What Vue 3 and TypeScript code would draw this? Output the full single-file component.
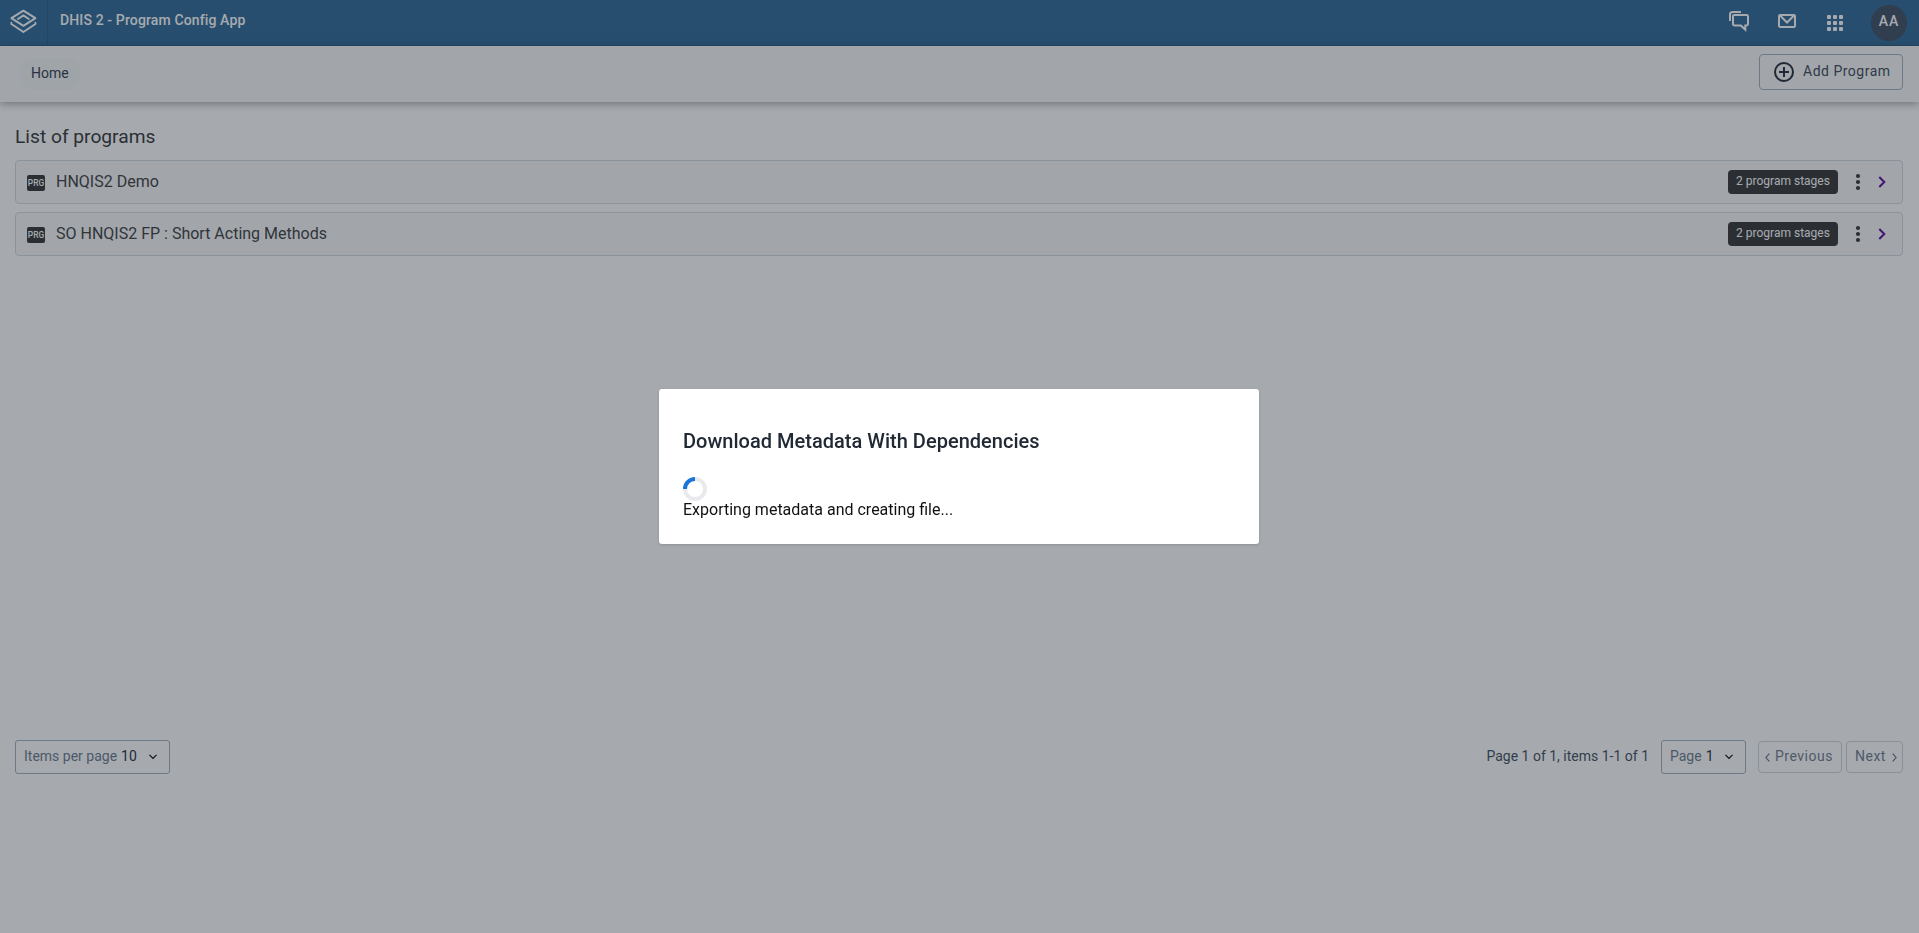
<script setup lang="ts">
interface Program {
  name: string
  stages: number
}

const programs: Program[] = [
  { name: 'HNQIS2 Demo', stages: 2 },
  { name: 'SO HNQIS2 FP : Short Acting Methods', stages: 2 },
]
</script>

<template>
  <div class="app">
    <header class="header">
      <div class="logo">
        <svg width="28" height="26" viewBox="-0.4 0 28 26" fill="none" stroke="#fff" stroke-width="1.9" stroke-linejoin="round" stroke-linecap="round">
          <path d="M14 2.6 26 10.1 14 17.9 2 10.1Z" />
          <path d="M8.6 11 14 7.4l5.4 3.6" />
          <path d="M2 14.8V16L14 24 26 16V14.8" />
        </svg>
      </div>
      <h1 class="app-name">DHIS 2 - Program Config App</h1>
      <div class="header-icons">
        <svg class="chat" width="24" height="24" viewBox="0 0 24 24" fill="none" stroke="#fff" stroke-width="2">
          <path d="M3 12V5.5A2.6 2.6 0 0 1 5.6 3H14" />
          <path d="M7.4 5.9H19.6A1.4 1.4 0 0 1 21 7.3V15A1.4 1.4 0 0 1 19.6 16.4H18.3V20.6L13.8 16.4H7.4A1.4 1.4 0 0 1 6 15V7.3A1.4 1.4 0 0 1 7.4 5.9Z" />
        </svg>
        <svg class="mail" width="24" height="24" viewBox="0 0 24 24" fill="none" stroke="#fff" stroke-width="2">
          <rect x="4" y="6" width="16" height="12" rx="1.2" />
          <path d="M5 6.5 12 13.5 19 6.5" />
        </svg>
        <svg class="apps" width="24" height="24" viewBox="0 0 24 24" fill="#fff">
          <template v-for="row in 3" :key="row">
            <rect v-for="col in 3" :key="col" :x="6 * col - 2" :y="6 * row - 2" width="4" height="4" rx="1" />
          </template>
        </svg>
        <div class="avatar">AA</div>
      </div>
    </header>

    <nav class="nav">
      <span class="crumb">Home</span>
      <button class="add" type="button">
        <svg width="24" height="24" viewBox="0 0 24 24" fill="none" stroke="#212934" stroke-width="2">
          <circle cx="12" cy="12" r="9" />
          <path d="M12 7v10M7 12h10" />
        </svg>
        <span>Add Program</span>
      </button>
    </nav>

    <main class="main">
      <h2 class="title">List of programs</h2>
      <div class="list">
        <div v-for="program in programs" :key="program.name" class="row">
          <span class="tag">PRG</span>
          <span class="name">{{ program.name }}</span>
          <span class="stages">{{ program.stages }} program stages</span>
          <svg class="dots" width="6" height="18" viewBox="0 0 6 18" fill="#333">
            <circle cx="3" cy="3" r="2.1" />
            <circle cx="3" cy="9" r="2.1" />
            <circle cx="3" cy="15" r="2.1" />
          </svg>
          <svg class="go" width="8" height="12" viewBox="0 0 8 12" fill="none" stroke="#5c0a99" stroke-width="2">
            <path d="M1.3 1 6.3 6 1.3 11" />
          </svg>
        </div>
      </div>
    </main>

    <footer class="pager">
      <div class="select">
        <span class="label">Items per page</span><span class="value">10</span>
        <svg width="8" height="6" viewBox="0 0 8 6" fill="none" stroke="#000" stroke-width="1.2"><path d="M.5.8 4 4.3 7.5.8" /></svg>
      </div>
      <span class="summary">Page 1 of 1, items 1-1 of 1</span>
      <div class="select page">
        <span class="label">Page</span><span class="value">1</span>
        <svg width="8" height="6" viewBox="0 0 8 6" fill="none" stroke="#000" stroke-width="1.2"><path d="M.5.8 4 4.3 7.5.8" /></svg>
      </div>
      <button class="step prev" type="button">
        <svg width="5" height="9" viewBox="0 0 5 9" fill="none" stroke="#5c646e" stroke-width="1.1"><path d="M4.3.7.9 4.5 4.3 8.3" /></svg>
        <span>Previous</span>
      </button>
      <button class="step next" type="button">
        <span>Next</span>
        <svg width="5" height="9" viewBox="0 0 5 9" fill="none" stroke="#5c646e" stroke-width="1.1"><path d="M.7.7 4.1 4.5.7 8.3" /></svg>
      </button>
    </footer>

    <div class="layer">
      <section class="modal" role="dialog">
        <h3 class="modal-title">Download Metadata With Dependencies</h3>
        <svg class="spinner" width="24" height="24" viewBox="0 0 24 24" fill="none" stroke-width="4">
          <circle cx="12" cy="12" r="10" stroke="#e8eaee" />
          <path d="M2 12A10 10 0 0 1 12 2" stroke="#1976d8" />
        </svg>
        <p class="modal-text">Exporting metadata and creating file...</p>
      </section>
    </div>
  </div>
</template>

<style>
body {
  margin: 0;
  overflow: hidden;
}
</style>

<style scoped>
.app {
  height: 100vh;
  display: flex;
  flex-direction: column;
  background: #fff;
  font-family: Roboto, 'Liberation Sans', sans-serif;
  color: #212934;
}
h1, h2, h3, p {
  margin: 0;
  font-weight: 400;
}
svg {
  display: block;
  flex: none;
}
button {
  font: inherit;
  color: inherit;
  background: none;
}
.header {
  flex: none;
  box-sizing: border-box;
  height: 46px;
  display: flex;
  background: #2c6693;
  border-bottom: 1px solid rgba(32, 32, 32, 0.15);
  color: #fff;
}
.logo {
  box-sizing: border-box;
  width: 48px;
  padding: 8px 0 0 9px;
  border-right: 1px solid rgba(32, 32, 32, 0.15);
}
.app-name {
  flex: 1;
  padding-left: 12px;
  font-size: 14px;
  line-height: 41px;
  font-weight: 500;
  letter-spacing: 0.13px;
}
.header-icons {
  display: flex;
  align-items: flex-start;
  padding-right: 12px;
}
.chat { margin: 9px 24px 0 0; }
.mail { margin: 9px 24px 0 0; }
.apps { margin: 11px 24px 0 0; }
.avatar {
  width: 36px;
  height: 36px;
  margin-top: 5px;
  border-radius: 50%;
  background: #3c4b60;
  font-size: 14px;
  line-height: 33px;
  font-weight: 500;
  letter-spacing: 1px;
  text-align: center;
}
.nav {
  flex: none;
  height: 56px;
  display: flex;
  justify-content: space-between;
  align-items: flex-start;
  box-sizing: border-box;
  padding: 8px 16px 0 19px;
  background: #f8f8f8;
  box-shadow: 0 2px 8px rgba(0, 0, 0, 0.35);
}
.crumb {
  height: 32px;
  margin-top: 4px;
  padding: 0 12px;
  border-radius: 16px;
  background: #f3f6f6;
  color: #303947;
  font-size: 14px;
  line-height: 30px;
}
.add {
  box-sizing: border-box;
  width: 144px;
  height: 36px;
  padding: 0 0 0 12px;
  display: flex;
  align-items: center;
  gap: 7px;
  border: 1px solid #a0adba;
  border-radius: 4px;
  font-size: 14px;
  letter-spacing: 0.5px;
  white-space: nowrap;
}
.add span {
  margin-top: -2px;
  color: #3c4552;
}
.main {
  flex: none;
  height: 638px;
  box-sizing: border-box;
  padding: 20px 16px 0 15px;
}
.title {
  height: 38px;
  padding-top: 1px;
  box-sizing: border-box;
  font-size: 19.2px;
  line-height: 27px;
  color: #333;
}
.list {
  display: flex;
  flex-direction: column;
  gap: 8px;
}
.row {
  box-sizing: border-box;
  height: 44px;
  display: flex;
  align-items: center;
  padding: 0 16px 0 11px;
  border: 1px solid #d0d9de;
  border-radius: 4px;
  background: #f8f8f8;
}
.tag {
  width: 18px;
  height: 16px;
  margin-top: 2px;
  border-radius: 2px;
  background: #333;
  color: #fff;
  font-size: 8.4px;
  line-height: 17px;
  font-weight: 500;
  text-align: center;
}
.name {
  flex: 1;
  margin: -2px 0 0 11px;
  font-size: 16px;
  color: #3c3c3c;
}
.stages {
  width: 110px;
  height: 24px;
  margin-right: 17px;
  border-radius: 4px;
  background: #333;
  color: #fff;
  font-size: 12px;
  line-height: 23px;
  text-align: center;
}
.dots {
  margin-right: 17px;
}
.pager {
  display: flex;
  align-items: center;
  height: 34px;
  padding: 0 16px 0 15px;
  font-size: 14px;
  white-space: nowrap;
}
.select {
  box-sizing: border-box;
  width: 155px;
  height: 34px;
  display: flex;
  align-items: center;
  gap: 4px;
  padding: 0 12px 0 8px;
  border: 1px solid #a0adba;
  border-radius: 3px;
}
.select svg {
  margin-left: auto;
}
.select span {
  margin-top: -2px;
}
.label {
  color: #6c7787;
}
.summary {
  margin: -2px 12px 0 auto;
  color: #404b5a;
}
.page {
  width: 85px;
  margin-right: 12px;
}
.step {
  box-sizing: border-box;
  height: 32px;
  display: flex;
  align-items: center;
  gap: 6px;
  padding: 0;
  border: 1px solid #cfd4da;
  border-radius: 4px;
  color: #6e7a8a;
  letter-spacing: 0.5px;
}
.step span {
  margin-top: -2px;
}
.prev {
  width: 84px;
  margin-right: 4px;
  padding-left: 6px;
  gap: 5px;
}
.next {
  width: 57px;
  padding-left: 8px;
}
.layer {
  position: fixed;
  inset: 0;
  display: flex;
  justify-content: center;
  align-items: center;
  padding-right: 1px;
  background: rgba(33, 43, 54, 0.4);
}
.modal {
  box-sizing: border-box;
  width: 600px;
  height: 155px;
  padding: 40px 24px 0;
  border-radius: 3px;
  background: #fff;
  box-shadow: 0 1px 3px rgba(0, 0, 0, 0.15);
}
.modal-title {
  font-size: 20px;
  line-height: 24px;
  font-weight: 500;
  letter-spacing: 0.02px;
  color: #212934;
}
.spinner {
  margin-top: 24px;
}
.modal-text {
  font-size: 16px;
  line-height: 18px;
  color: #111;
}
</style>
